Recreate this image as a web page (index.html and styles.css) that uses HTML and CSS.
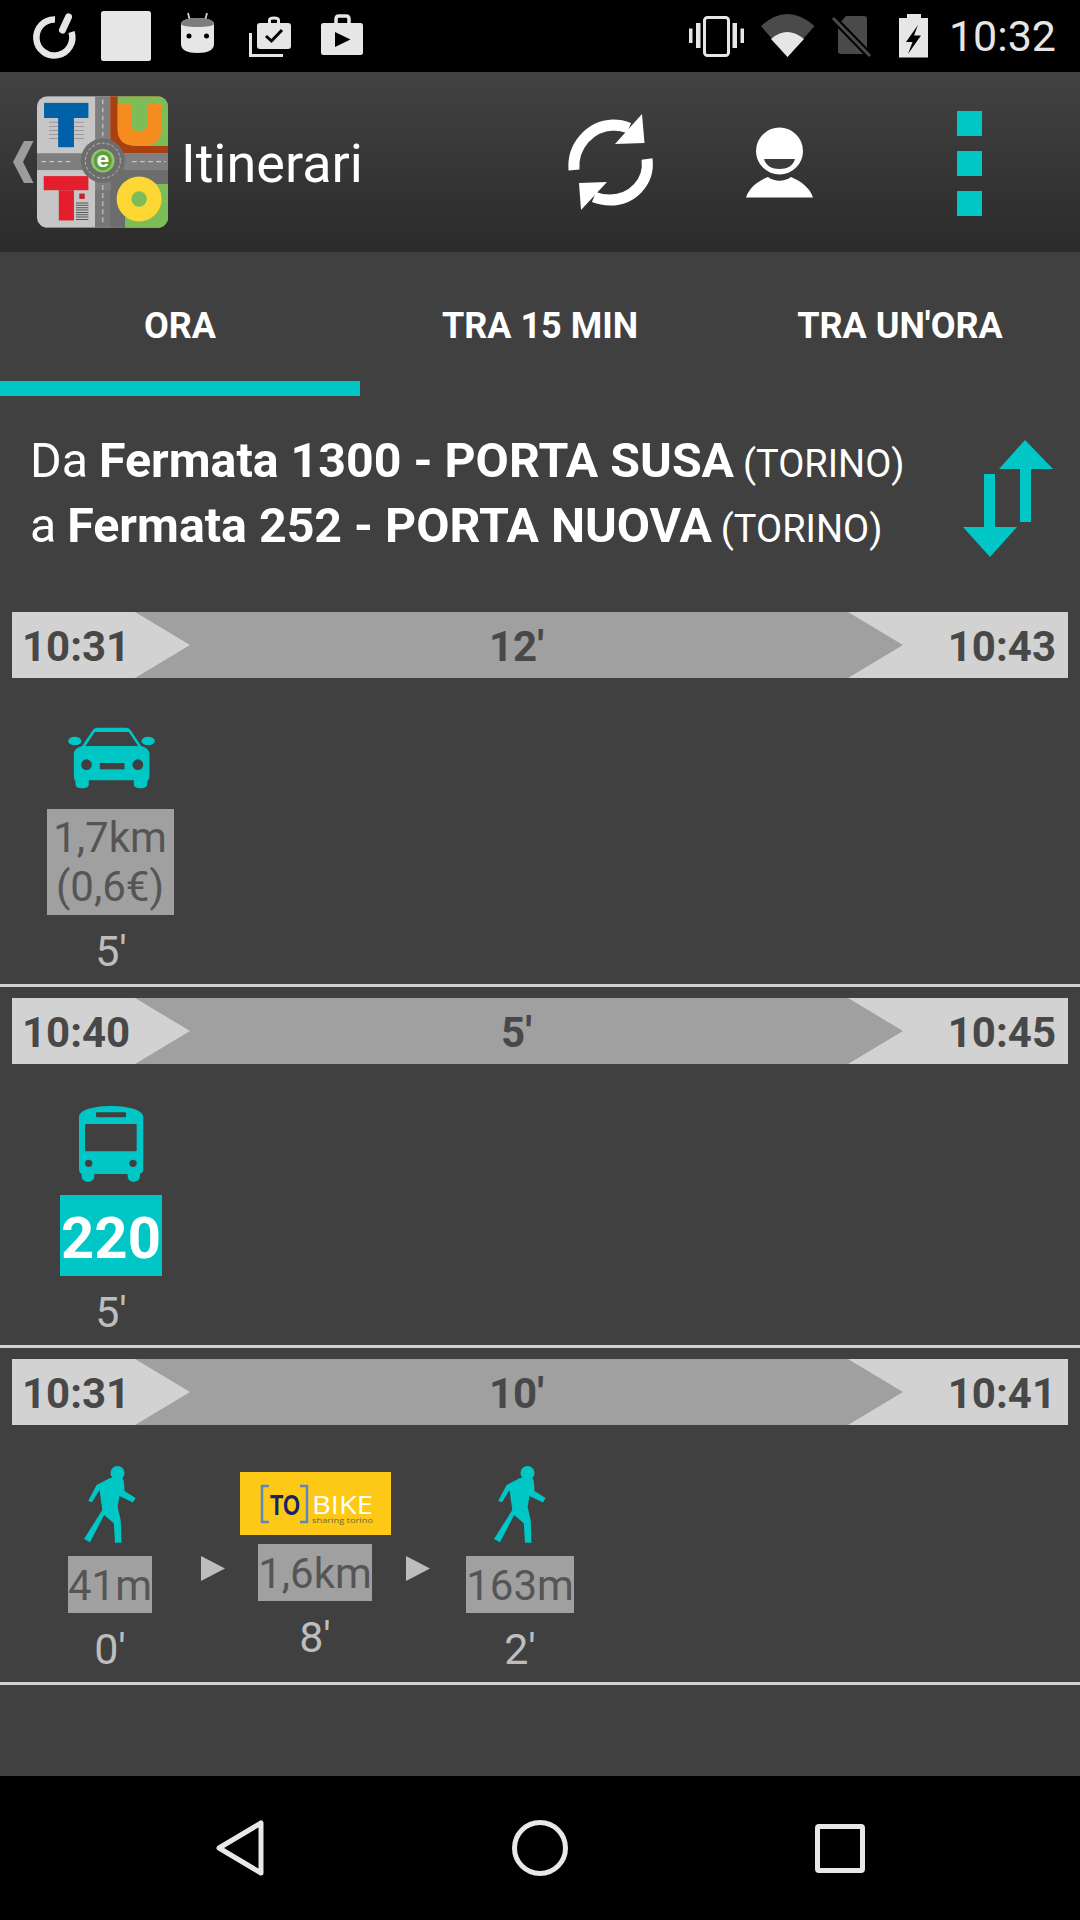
FILE: index.html
```html
<!DOCTYPE html>
<html lang="it">
<head>
<meta charset="utf-8">
<title>Itinerari</title>
<link rel="stylesheet" href="styles.css">
</head>
<body>
<div class="app">
  <header class="statusbar">
    <div class="status-left">
      <svg width="58" height="72" viewBox="30 0 58 72"><path d="M55 19.500A18 18 0 1 0 71.500 32" fill="none" stroke="#e6e6e6" stroke-width="6.500"/><path d="M62.500 30L68.500 17" stroke="#e6e6e6" stroke-width="7" stroke-linecap="round"/></svg>
      <svg width="78" height="72" viewBox="88 0 78 72"><rect x="101" y="11" width="50" height="50" rx="2.500" fill="#e6e6e6"/></svg>
      <svg width="66" height="72" viewBox="166 0 66 72"><path d="M188 13L190 21M207 13L205 21" stroke="#cfcfcf" stroke-width="1.800"/><path d="M181 24C181 20 189 18 197.500 18C206 18 214 20 214 24V44C214 50 208 53 197.500 53C187 53 181 50 181 44Z" fill="#e6e6e6"/><path d="M181 24C181 20 189 18 197.500 18C206 18 214 20 214 24C214 26 206 27 197.500 27C189 27 181 26 181 24Z" fill="#7d7d7d"/><circle cx="189" cy="36" r="2.500" fill="#000"/><circle cx="206.500" cy="36" r="2.500" fill="#000"/></svg>
      <svg width="74" height="72" viewBox="232 0 74 72"><path d="M269.500 24V20C269.500 18.500 271 18 274 18C277 18 278.500 18.500 278.500 20V24" fill="none" stroke="#e6e6e6" stroke-width="3"/><rect x="257" y="23" width="34" height="26" rx="3" fill="#e6e6e6"/><path d="M266 36L271.500 41L282 30" fill="none" stroke="#000" stroke-width="3"/><path d="M250.500 33V55.500H283" fill="none" stroke="#e6e6e6" stroke-width="3"/></svg>
      <svg width="72" height="72" viewBox="306 0 72 72"><path d="M336 24V19C336 17 337 16 339 16H346C348 16 349 17 349 19V24" fill="none" stroke="#e6e6e6" stroke-width="3.500"/><rect x="321" y="23" width="42" height="32" rx="2.500" fill="#e6e6e6"/><path d="M335 32L350.500 39.500L335 47Z" fill="#000"/></svg>
    </div>
    <div class="status-right">
      <svg width="72" height="72" viewBox="680 0 72 72"><rect x="704.500" y="17.500" width="24" height="38" rx="3" fill="none" stroke="#e6e6e6" stroke-width="3"/><path d="M696 23h4.500v25H696zM689 28.500h3.500v14.500H689zM732.500 23h4.500v25h-4.500zM740.500 28.500h3.500v14.500h-3.500z" fill="#e6e6e6"/></svg>
      <svg width="73" height="72" viewBox="752 0 73 72"><path d="M761 26Q787 2 814.500 26L787.500 57Z" fill="#4a4a4a"/><path d="M771 39Q787 25 804 39L787.500 57Z" fill="#e6e6e6"/></svg>
      <svg width="60" height="72" viewBox="825 0 60 72"><path d="M838 25L846 16H864C866 16 867 17 867 19V54H841C839 54 838 53 838 51Z" fill="#4a4a4a"/><path d="M834 19L871 57" stroke="#000" stroke-width="7"/><path d="M833 18L870 56" stroke="#4a4a4a" stroke-width="3"/></svg>
      <svg width="55" height="72" viewBox="885 0 55 72"><path d="M907 18V14H921V18H928V57.500H899V18Z" fill="#e6e6e6"/><path d="M918 25L906 42H912.500L908 54L921 35.500H914Z" fill="#000"/></svg>
      <span class="clock">10:32</span>
    </div>
  </header>

  <nav class="toolbar">
    <svg class="back" width="37" height="180" viewBox="0 72 37 180"><path d="M33.500 141H24L13 162L24 183H33.500L23 162Z" fill="#9c9c9c"/></svg>
    <svg class="logo" width="131" height="132" viewBox="22 20 390 392">
      <defs><clipPath id="logo-clip"><rect x="22" y="20" width="390" height="392" rx="32"/></clipPath></defs>
      <g clip-path="url(#logo-clip)">
        <rect x="22" y="20" width="390" height="392" fill="#c6c6c6"/>
        <rect x="22" y="190" width="390" height="50" fill="#7f7f7f"/>
        <rect x="195" y="20" width="45" height="392" fill="#7f7f7f"/>
        <rect x="195" y="300" width="90" height="112" fill="#777"/>
        <path d="M240 240H412V282H330Q285 282 285 330V412H240Z" fill="#6d6d6d"/>
        <rect x="240" y="20" width="172" height="170" fill="#a8400f"/>
        <path d="M262 20H412V168H320Q262 168 262 115Z" fill="#7dbd57"/>
        <path d="M262 40H302V100Q302 125 326 125Q350 125 350 100V40H392V118Q392 168 340 168H315Q262 168 262 118Z" fill="#f68b1f"/>
        <rect x="285" y="282" width="127" height="130" fill="#7dbd57"/>
        <circle cx="326" cy="326" r="67" fill="#fdd835"/>
        <circle cx="326" cy="326" r="23" fill="#7dbd57"/>
        <path d="M58 98H162M58 110H162M58 122H162M58 134H162M58 146H162" stroke="#9a9a9a" stroke-width="3"/>
        <rect x="43" y="40" width="132" height="45" fill="#0061a8"/>
        <rect x="85" y="85" width="47" height="87" fill="#0061a8"/>
        <rect x="42" y="258" width="133" height="42" fill="#e41e2d"/>
        <rect x="87" y="300" width="45" height="90" fill="#e41e2d"/>
        <rect x="148" y="310" width="16" height="16" fill="#c8202c"/>
        <path d="M138 338H175M138 345H175M138 352H175M138 359H175M138 366H175M138 373H175M138 380H175M138 387H175" stroke="#555" stroke-width="3"/>
        <path d="M35 215H130M305 215H405M218 30V140M218 285V405" stroke="#e8e8e8" stroke-width="2.500" stroke-dasharray="14 10"/>
        <circle cx="218" cy="212" r="66" fill="#6d6d6d"/>
        <circle cx="218" cy="212" r="52" fill="none" stroke="#dcdcdc" stroke-width="2" stroke-dasharray="9 6"/>
        <circle cx="218" cy="212" r="35" fill="#8fc46a"/>
        <ellipse cx="218" cy="212" rx="27" ry="29" fill="#5b9e3c"/>
        <text class="logo-e" x="218" y="231" text-anchor="middle">e</text>
      </g>
    </svg>
    <h1 class="title">Itinerari</h1>
    <div class="actions">
      <svg width="104" height="180" viewBox="560 72 104 180"><path d="M574 170C572 146 590 126 613 125C619 125 624 126 629 128" fill="none" stroke="#fff" stroke-width="11"/><path d="M642 114L644.500 143L615 144Z" fill="#fff"/><path d="M647 159C650 182 632 200 610 200C604 200 599 199 594 197" fill="none" stroke="#fff" stroke-width="11"/><path d="M579 183L607 182L581 210Z" fill="#fff"/></svg>
      <svg class="person" width="90" height="180" viewBox="735 72 90 180"><circle cx="779.500" cy="151" r="23.500" fill="#fff"/><path d="M764 159H795C793 166 787 169 779.500 169C772 169 766 166 764 159Z" fill="#3b3b3b"/><path d="M746 197.500C749 188 758 181 768 177C775 182 784 182 791 177C801 181 810 188 813 197.500Z" fill="#fff"/></svg>
      <div class="kebab"><span class="kebab-dot"></span><span class="kebab-dot"></span><span class="kebab-dot"></span></div>
    </div>
  </nav>

  <div class="tabs">
    <div class="tab tab-active">ORA</div>
    <div class="tab">TRA 15 MIN</div>
    <div class="tab">TRA UN'ORA</div>
  </div>

  <section class="route">
    <div class="route-text">
      <div>Da <b>Fermata 1300 - PORTA SUSA</b> <small>(TORINO)</small></div>
      <div>a <b>Fermata 252 - PORTA NUOVA</b> <small>(TORINO)</small></div>
    </div>
    <svg class="swap" width="90" height="117" viewBox="963 440 90 117"><path d="M1025 440L1053 469H1031V522H1020V469H999Z" fill="#00c6c6"/><path d="M990 557L1017 527H995V474H984V527H963Z" fill="#00c6c6"/></svg>
  </section>

  <main class="results">
    <article class="itinerary">
      <div class="bar"><span class="bar-time bar-start">10:31</span><span class="bar-mid">12'</span><span class="bar-time bar-end">10:43</span></div>
      <div class="legs">
        <div class="leg">
          <div class="leg-icon"><svg width="87" height="64" viewBox="203 405 260 192"><path d="M220 490C220 478 228 470 245 465L275 420Q280 410 292 410H375Q387 410 392 420L422 465C439 470 447 478 447 490V550C447 562 445 568 440 570V580C440 588 432 592 420 592C408 592 400 588 400 580V568H265V580C265 588 257 592 245 592C233 592 225 588 225 580V570C222 568 220 562 220 550Z" fill="#00c6c6"/><ellipse cx="223" cy="450" rx="20" ry="13" fill="#00c6c6"/><ellipse cx="443" cy="450" rx="20" ry="13" fill="#00c6c6"/><path d="M255 465L283 423H385L413 465Z" fill="#404040"/><circle cx="258" cy="521" r="16" fill="#404040"/><circle cx="412" cy="521" r="16" fill="#404040"/><rect x="298" y="516" width="74" height="19" fill="#404040"/></svg></div>
          <div class="dist dist-wide">1,7km<br>(0,6€)</div>
          <div class="duration">5'</div>
        </div>
      </div>
    </article>

    <article class="itinerary">
      <div class="bar"><span class="bar-time bar-start">10:40</span><span class="bar-mid">5'</span><span class="bar-time bar-end">10:45</span></div>
      <div class="legs">
        <div class="leg">
          <div class="leg-icon"><svg width="65" height="77" viewBox="237 46 195 231"><path d="M237 80C237 55 290 46 333 46C376 46 430 55 430 80V235C430 243 426 248 420 250V255C420 266 412 273 401 273C390 273 383 266 383 255V250H283V255C283 266 276 273 264 273C253 273 245 266 245 255V250C240 248 237 243 237 235Z" fill="#00c6c6"/><rect x="288" y="65" width="90" height="15" rx="3" fill="#404040"/><rect x="255" y="100" width="155" height="82" rx="3" fill="#404040"/><circle cx="266" cy="218" r="11" fill="#404040"/><circle cx="399" cy="218" r="11" fill="#404040"/></svg></div>
          <div class="line-badge">220</div>
          <div class="duration">5'</div>
        </div>
      </div>
    </article>

    <article class="itinerary">
      <div class="bar"><span class="bar-time bar-start">10:31</span><span class="bar-mid">10'</span><span class="bar-time bar-end">10:41</span></div>
      <div class="legs legs-multi">
        <div class="leg">
          <div class="leg-icon"><svg width="54" height="80" viewBox="84 1465 54 80"><circle cx="118.500" cy="1473" r="7" fill="#00c6c6"/><path d="M111 1478L122 1477.500Q125 1479 125 1483L125.500 1491L136.600 1498L134 1502.500L120.500 1496L118.600 1507L121.700 1520L122.500 1542.700H116L114.800 1523.300L105.200 1515L91 1542.300L85 1539L103.300 1510L100.500 1490L93 1502.300L89.200 1501L97.600 1485Z" fill="#00c6c6"/></svg></div>
          <div class="dist">41m</div>
          <div class="duration">0'</div>
        </div>
        <svg class="step" width="25" height="25" viewBox="0 0 25 25"><path d="M1 0L25 12.500L1 25Z" fill="#bdbdbd"/></svg>
        <div class="leg leg-bike">
          <div class="bike-logo">
            <svg width="151" height="63" viewBox="0 0 151 63">
              <path d="M29 14H22V50H29" fill="none" stroke="#5b86c4" stroke-width="2.500"/>
              <path d="M60 14H67V50H60" fill="none" stroke="#5b86c4" stroke-width="2.500"/>
              <text class="bike-to" x="30" y="43" textLength="30" lengthAdjust="spacingAndGlyphs">TO</text>
              <text class="bike-name" x="72" y="42" textLength="61" lengthAdjust="spacingAndGlyphs">BIKE</text>
              <text class="bike-sub" x="72" y="51" textLength="61" lengthAdjust="spacingAndGlyphs">sharing torino</text>
            </svg>
          </div>
          <div class="dist">1,6km</div>
          <div class="duration">8'</div>
        </div>
        <svg class="step" width="25" height="25" viewBox="0 0 25 25"><path d="M1 0L25 12.500L1 25Z" fill="#bdbdbd"/></svg>
        <div class="leg">
          <div class="leg-icon"><svg width="54" height="80" viewBox="84 1465 54 80"><circle cx="118.500" cy="1473" r="7" fill="#00c6c6"/><path d="M111 1478L122 1477.500Q125 1479 125 1483L125.500 1491L136.600 1498L134 1502.500L120.500 1496L118.600 1507L121.700 1520L122.500 1542.700H116L114.800 1523.300L105.200 1515L91 1542.300L85 1539L103.300 1510L100.500 1490L93 1502.300L89.200 1501L97.600 1485Z" fill="#00c6c6"/></svg></div>
          <div class="dist">163m</div>
          <div class="duration">2'</div>
        </div>
      </div>
    </article>
  </main>

  <footer class="navbar">
    <svg width="48" height="56" viewBox="0 0 48 56"><path d="M45 3V53L3 28Z" fill="none" stroke="#e8e8e8" stroke-width="5" stroke-linejoin="round"/></svg>
    <svg width="56" height="56" viewBox="0 0 56 56"><circle cx="28" cy="28" r="25.500" fill="none" stroke="#e8e8e8" stroke-width="5"/></svg>
    <svg width="50" height="49" viewBox="0 0 50 49"><rect x="2.500" y="2.500" width="45" height="44" rx="1.500" fill="none" stroke="#e8e8e8" stroke-width="5"/></svg>
  </footer>
</div>
</body>
</html>
```

FILE: styles.css
```css
* { box-sizing: border-box; }
html, body { margin: 0; padding: 0; }
body { width: 1080px; height: 1920px; overflow: hidden; background: #404040; font-family: Roboto, "Liberation Sans", sans-serif; }
svg { display: block; flex: none; }

.app { width: 1080px; height: 1920px; display: flex; flex-direction: column; }

.statusbar { height: 72px; background: #000; display: flex; justify-content: space-between; flex: none; }
.status-left { display: flex; padding-left: 30px; }
.status-right { display: flex; align-items: center; }
.clock { font-size: 43px; color: #e6e6e6; padding: 0 24px 0 9px; line-height: 72px; }

.toolbar { height: 180px; flex: none; display: flex; align-items: center; background: linear-gradient(#424242, #2b2b2b); }
.logo { margin-top: -1px; }
.logo-e { font: 700 68px "Liberation Sans", sans-serif; fill: #fff; }
.title { margin: 4px 0 0 13px; font-size: 54px; font-weight: 400; color: #fff; line-height: 60px; }
.actions { margin-left: auto; display: flex; align-items: center; padding-right: 98px; }
.person { margin-left: 71px; }
.kebab { margin-left: 132px; width: 25px; display: flex; flex-direction: column; gap: 14.500px; margin-top: 3px; }
.kebab-dot { display: block; height: 25.500px; background: #00c6c6; }

.tabs { height: 144px; flex: none; display: flex; }
.tab { width: 360px; border-bottom: 15px solid transparent; padding-top: 18px; display: flex; align-items: center; justify-content: center; color: #fff; font-size: 36px; font-weight: 700; }
.tab-active { border-bottom-color: #00c6c6; }

.route { height: 216px; flex: none; padding: 32px 27px 0 30px; display: flex; justify-content: space-between; color: #fff; font-size: 48.300px; line-height: 65px; white-space: nowrap; }
.route b { font-weight: 700; margin-left: -1px; }
.route small { font-size: 38px; line-height: 1; margin-left: -3px; }
.swap { margin-top: 12px; }

.results { flex: 1; }
.itinerary { border-bottom: 3px solid #d2d2d2; margin-bottom: 11px; height: 375px; }
.itinerary:nth-child(2) { height: 350px; }
.itinerary:nth-child(3) { height: 326px; }

.bar { margin: 0 12px; height: 66px; display: flex; background: #d2d2d2; color: #484848; font-size: 42px; font-weight: 700; line-height: 69px; }
.bar-time { flex: none; }
.bar-start { width: 123px; padding-left: 10px; }
.bar-end { width: 165px; text-align: right; padding-right: 12px; }
.bar-mid { flex: 1; text-align: center; padding-right: 5px; background: #a0a0a0; clip-path: polygon(0 0, calc(100% - 55px) 0, 100% 50%, calc(100% - 55px) 100%, 0 100%, 55px 50%); }

.legs { display: flex; padding-left: 21px; align-items: flex-start; }
.legs-multi { padding-left: 20px; }
.leg { width: 180px; display: flex; flex-direction: column; align-items: center; flex: none; }
.leg-icon { height: 131px; padding: 40px 0 11px; display: flex; flex-direction: column; justify-content: center; }
.leg-bike { padding-top: 47px; }
.bike-logo { width: 151px; height: 63px; background: #fdc916; margin-bottom: 9px; }
.bike-to { font: 700 29px "Liberation Sans", sans-serif; fill: #14246b; }
.bike-name { font: 400 26px "Open Sans", "Liberation Sans", sans-serif; fill: #fff; }
.bike-sub { font: 400 7.500px "Open Sans", "Liberation Sans", sans-serif; fill: #6f6a3a; }
.step { margin-top: 131px; }

.dist { background: #a0a0a0; color: #555; font-size: 42px; line-height: 49px; padding: 5px 0 3px; text-align: center; }
.dist-wide { width: 127px; padding: 4px 0; margin-right: 2px; }
.line-badge { width: 102px; height: 81px; background: #00c6c6; color: #fff; font-size: 58px; font-weight: 700; line-height: 87px; text-align: center; }
.duration { color: #bdbdbd; font-size: 43px; line-height: 48px; margin-top: 12px; }

.navbar { height: 144px; flex: none; background: #000; display: flex; align-items: center; justify-content: space-between; padding: 0 215px 0 216px; }
```
